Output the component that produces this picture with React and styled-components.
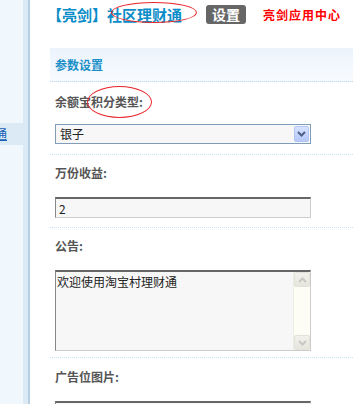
import React from "react";
import styled, { createGlobalStyle } from "styled-components";

const GlobalStyle = createGlobalStyle`
  html, body {
    margin: 0;
    padding: 0;
    background: #fff;
  }
  body {
    font-family: "Noto Sans CJK SC", "Liberation Sans", sans-serif;
    font-size: 12px;
    color: #333;
    overflow: hidden;
  }
`;

const Page = styled.div`
  display: flex;
  height: 404px;
  overflow: hidden;
`;

const Sidebar = styled.div`
  width: 30px;
  flex-shrink: 0;
  padding-top: 123px;
  box-sizing: border-box;
  background: linear-gradient(
    to right,
    #f1f8fd 0 23px,
    #dceaf6 23px 28px,
    #b6cfe2 28px 30px
  );
`;

const NavItem = styled.div`
  width: 23px;
  height: 22px;
  box-sizing: border-box;
  padding-right: 16px;
  background: ${({ $active }) => ($active ? "#dceaf6" : "transparent")};
  display: flex;
  align-items: center;
  justify-content: flex-end;
  overflow: hidden;
`;

const NavLink = styled.a`
  flex-shrink: 0;
  white-space: nowrap;
  color: #1a62b5;
  text-decoration: underline;
  font-size: 12px;
  line-height: 16px;
`;

const Main = styled.div`
  flex: 1;
  min-width: 0;
  padding-left: 20px;
`;

const TopBar = styled.div`
  display: flex;
  align-items: center;
  height: 19px;
  padding-top: 5px;
`;

const Title = styled.div`
  font-size: 15px;
  font-weight: bold;
  color: #0a8dc8;
  line-height: 19px;
  white-space: nowrap;
  margin-left: -3px;
`;

const Marked = styled.span`
  position: relative;
`;

const Ellipse = styled.span`
  position: absolute;
  top: ${({ $t }) => $t}px;
  left: ${({ $l }) => $l}px;
  right: ${({ $r }) => $r}px;
  bottom: ${({ $b }) => $b}px;
  border: 1px solid #e8262b;
  border-radius: 50%;
  pointer-events: none;
`;

const SetButton = styled.span`
  margin-left: 24px;
  height: 19px;
  padding: 0 6px;
  border-radius: 3px;
  background: #666;
  color: #fff;
  font-size: 14px;
  font-weight: bold;
  line-height: 19px;
`;

const CenterLink = styled.a`
  margin-left: 17px;
  color: #f00;
  font-size: 12px;
  font-weight: bold;
  letter-spacing: 1px;
  line-height: 19px;
`;

const SectionHeader = styled.div`
  margin-top: 24px;
  height: 33px;
  padding-left: 5px;
  display: flex;
  align-items: center;
  border-bottom: 1px dotted #bcdaf1;
  background: linear-gradient(to bottom, #ebf3fc, #f8fbfe);
  color: #1a8fc8;
  font-size: 12px;
  font-weight: bold;
`;

const Row = styled.div`
  padding: ${({ $top }) => $top ?? 12}px 0 ${({ $bottom }) => $bottom ?? 9}px 5px;
  border-bottom: 1px dotted #c6e2f5;
`;

const Label = styled.div`
  color: #555;
  font-size: 12px;
  font-weight: bold;
  line-height: 16px;
  margin-bottom: ${({ $gap }) => $gap ?? 16}px;
`;

const Colon = styled.span`
  color: #4a5a6a;
`;

const SelectBox = styled.div`
  width: 256px;
  height: 20px;
  box-sizing: border-box;
  border: 1px solid #7f9db9;
  background: #f7f7f7;
  display: flex;
  align-items: center;
  padding: 0 1px 0 4px;
`;

const SelectValue = styled.span`
  flex: 1;
  color: #222;
  font-size: 12px;
  line-height: 16px;
`;

const DropButton = styled.span`
  width: 15px;
  height: 16px;
  box-sizing: border-box;
  border: 1px solid #b3c5f0;
  border-radius: 2px;
  background: linear-gradient(to bottom, #d6e2fe, #b5c8f9);
  display: flex;
  align-items: center;
  justify-content: center;
`;

const TextInput = styled.input`
  display: block;
  width: 256px;
  height: 21px;
  box-sizing: border-box;
  margin: 0;
  padding: 0 3px;
  border: 1px solid #ccc;
  border-top: 2px solid #666;
  border-left-color: #888;
  background: #f7f7f7;
  color: #222;
  font-family: inherit;
  font-size: 12px;
  outline: none;
`;

const TextArea = styled.div`
  width: 256px;
  height: 81px;
  box-sizing: border-box;
  border: 1px solid #ccc;
  border-top: 2px solid #666;
  border-left-color: #888;
  background: #f7f7f7;
  display: flex;
`;

const AreaText = styled.div`
  flex: 1;
  padding: 2px 1px;
  color: #222;
  font-size: 12px;
  line-height: 16px;
`;

const Scrollbar = styled.div`
  width: 16px;
  background: #fdfdf5;
  border-left: 1px solid #eeeee6;
  display: flex;
  flex-direction: column;
  justify-content: space-between;
`;

const ScrollButton = styled.span`
  height: 15px;
  box-sizing: border-box;
  border: 1px solid #e2e2da;
  border-radius: 2px;
  background: linear-gradient(to bottom, #f2f2ec, #e6e6de);
  display: flex;
  align-items: center;
  justify-content: center;
`;

const Chevron = ({ up, color }) => (
  <svg width="9" height="6" viewBox="0 0 9 6">
    <path
      d={up ? "M1 5 L4.5 1.5 L8 5" : "M1 1 L4.5 4.5 L8 1"}
      fill="none"
      stroke={color}
      strokeWidth="2"
    />
  </svg>
);

export default function App() {
  return (
    <>
      <GlobalStyle />
      <Page>
        <Sidebar>
          <NavItem $active>
            <NavLink>社区理财通</NavLink>
          </NavItem>
        </Sidebar>
        <Main>
          <TopBar>
            <Title>
              【亮剑】
              <Marked>
                社区理财通
                <Ellipse $t={-2} $l={4} $r={-15} $b={2} />
              </Marked>
            </Title>
            <SetButton>设置</SetButton>
            <CenterLink>亮剑应用中心</CenterLink>
          </TopBar>

          <SectionHeader>参数设置</SectionHeader>

          <Row $top={12} $bottom={10}>
            <Label $gap={14}>
              余额宝
              <Marked>
                积分类型<Colon>:</Colon>
                <Ellipse $t={-7} $l={-4} $r={-9} $b={-8} />
              </Marked>
            </Label>
            <SelectBox>
              <SelectValue>银子</SelectValue>
              <DropButton>
                <Chevron color="#4d6185" />
              </DropButton>
            </SelectBox>
          </Row>

          <Row $top={10}>
            <Label>
              万份收益<Colon>:</Colon>
            </Label>
            <TextInput defaultValue="2" />
          </Row>

          <Row $top={10} $bottom={6}>
            <Label>
              公告<Colon>:</Colon>
            </Label>
            <TextArea>
              <AreaText>欢迎使用淘宝村理财通</AreaText>
              <Scrollbar>
                <ScrollButton>
                  <Chevron up color="#c9c9c1" />
                </ScrollButton>
                <ScrollButton>
                  <Chevron color="#c9c9c1" />
                </ScrollButton>
              </Scrollbar>
            </TextArea>
          </Row>

          <Row $top={11}>
            <Label>
              广告位图片<Colon>:</Colon>
            </Label>
            <TextInput defaultValue="source/plugin/lj_licai/images/ad.jpg" />
          </Row>
        </Main>
      </Page>
    </>
  );
}
